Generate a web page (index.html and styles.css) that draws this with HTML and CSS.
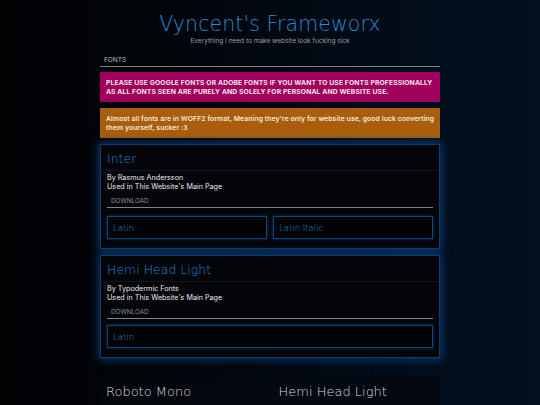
FILE: index.html
```html
<!DOCTYPE html>
<html>
<head>
<meta charset="utf-8">
<link rel="stylesheet" href="styles.css">
</head>
<body>
<div class="page">
  <header class="head">
    <h1 class="title">Vyncent's Frameworx</h1>
    <p class="subtitle">Everything I need to make website look fucking sick</p>
  </header>
  <div class="section-label">FONTS</div>
  <div class="notice pink">PLEASE USE GOOGLE FONTS OR ADOBE FONTS IF YOU WANT TO USE FONTS PROFESSIONALLY AS ALL FONTS SEEN ARE PURELY AND SOLELY FOR PERSONAL AND WEBSITE USE.</div>
  <div class="notice orange">Almost all fonts are in WOFF2 format, Meaning they're only for website use, good luck converting them yourself, sucker :3</div>

  <div class="card">
    <div class="card-title">Inter</div>
    <div class="card-body">
      <div class="meta">By Rasmus Andersson<br>Used in This Website's Main Page</div>
      <div class="download">DOWNLOAD</div>
      <div class="variants two">
        <div class="variant">Latin</div>
        <div class="variant">Latin Italic</div>
      </div>
    </div>
  </div>

  <div class="card">
    <div class="card-title">Hemi Head Light</div>
    <div class="card-body">
      <div class="meta">By Typodermic Fonts<br>Used in This Website's Main Page</div>
      <div class="download">DOWNLOAD</div>
      <div class="variants single">
        <div class="variant">Latin</div>
      </div>
    </div>
  </div>

  <div class="grid">
    <div class="mini"><div class="mini-title">Roboto Mono</div></div>
    <div class="mini right"><div class="mini-title">Hemi Head Light</div></div>
  </div>
</div>
</body>
</html>
```
FILE: styles.css
```css
html, body {
  margin: 0;
  padding: 0;
  height: 100%;
}
body {
  background:
    repeating-linear-gradient(90deg, rgba(255,255,255,0.006) 0 1px, transparent 1px 46px),
    linear-gradient(90deg, #010204 0%, #02060c 40%, #020c18 70%, #02101f 100%);
  font-family: "Inter", "Liberation Sans", sans-serif;
  color: #e6e6e6;
  overflow: hidden;
}
.page {
  width: 340px;
  margin: 0 auto;
  padding-top: 12px;
}
.head {
  text-align: center;
}
.title {
  margin: 0;
  font-family: "DejaVu Sans", sans-serif;
  font-weight: 200;
  font-size: 20.5px;
  line-height: 25px;
  color: #228cd4;
  letter-spacing: 0.1px;
}
.subtitle {
  margin: 0;
  font-size: 6.5px;
  line-height: 9px;
  color: #9a9ea4;
}
.section-label {
  margin-top: 9px;
  font-size: 6.5px;
  line-height: 10px;
  color: #b8bcc2;
  padding-left: 4px;
  border-bottom: 1px solid #7a8088;
  padding-bottom: 1px;
}
.notice {
  margin-top: 5px;
  padding: 6px 5px 6px 6px;
  font-size: 6.8px;
  letter-spacing: 0.1px;
  line-height: 9px;
  font-weight: 700;
  height: 18px;
  color: #f0e6ee;
  overflow: hidden;
}
.pink {
  background: #a1005c;
}
.orange {
  background: #a85e0c;
  color: #f4ead8;
  font-weight: 600;
  margin-top: 6px;
}
.card {
  margin-top: 6px;
  background: #030509;
  border: 1px solid #0c3c6c;
  box-shadow: 0 0 8px 2px rgba(10, 70, 140, 0.75);
}
.card-title {
  font-family: "DejaVu Sans", sans-serif;
  font-weight: 200;
  font-size: 12.5px;
  line-height: 16px;
  color: #2288cc;
  padding: 6px 6px 3px;
  border-bottom: 1px solid #12161c;
}
.card-body {
  padding: 3px 6px 9px;
}
.meta {
  font-size: 7.2px;
  line-height: 8.5px;
  color: #ececec;
}
.download {
  margin-top: 6px;
  font-size: 6.4px;
  line-height: 9px;
  color: #8a8e94;
  padding-left: 4px;
  padding-bottom: 1px;
  border-bottom: 1.5px solid #80848a;
}
.variants {
  margin-top: 8px;
  display: grid;
  grid-template-columns: 1fr;
  gap: 6px;
}
.variants.two {
  grid-template-columns: 1fr 1fr;
}
.variants.single {
  margin-top: 6px;
}
.variant {
  height: 21px;
  display: flex;
  align-items: center;
  padding-left: 5px;
  font-family: "DejaVu Sans", sans-serif;
  font-weight: 200;
  font-size: 8.5px;
  color: #2a90d8;
  background: #020305;
  border: 1px solid #0e4478;
  box-shadow: 0 0 3px rgba(14, 80, 150, 0.7);
}
.grid {
  margin-top: 18px;
  display: grid;
  grid-template-columns: 1fr 1fr;
  gap: 5px;
}
.mini {
  height: 40px;
  padding: 8px 6px;
  background: linear-gradient(180deg, rgba(8,14,22,0.0), rgba(6,10,16,0.9));
}
.mini.right {
  background: #040810;
}
.mini-title {
  font-family: "DejaVu Sans", sans-serif;
  font-weight: 200;
  font-size: 13px;
  line-height: 16px;
  color: #d6d8dc;
}
```
